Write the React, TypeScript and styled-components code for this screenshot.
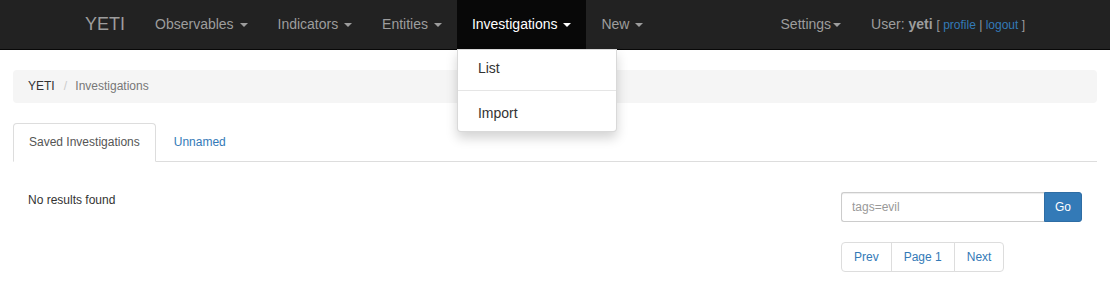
import React from "react";
import styled, { createGlobalStyle } from "styled-components";

const GlobalStyle = createGlobalStyle`
  * { box-sizing: border-box; }
  html, body { margin: 0; padding: 0; background: #fff; }
  body {
    font-family: "Liberation Sans", Arial, Helvetica, sans-serif;
    font-size: 12px;
    line-height: 1.42857143;
    color: #333;
  }
  ul, ol { margin: 0; padding: 0; list-style: none; }
  a { text-decoration: none; }
`;

const Navbar = styled.nav`
  background: #222;
  border-bottom: 1px solid #080808;
  position: relative;
  z-index: 10;
`;

const NavContainer = styled.div`
  width: 970px;
  margin: 0 auto;
  display: flex;
  height: 49px;
  font-size: 14px;
`;

const Brand = styled.a`
  padding: 0 15px;
  font-size: 18px;
  line-height: 49px;
  color: #9d9d9d;
`;

const NavList = styled.ul<{ $right?: boolean }>`
  display: flex;
  margin-left: ${(p) => (p.$right ? "auto" : "0")};
`;

const NavItem = styled.li`
  position: relative;
  display: flex;
`;

const NavLink = styled.a<{ $active?: boolean }>`
  display: block;
  padding: 0 15px;
  line-height: 49px;
  color: ${(p) => (p.$active ? "#fff" : "#9d9d9d")};
  background: ${(p) => (p.$active ? "#080808" : "transparent")};
  white-space: pre;
`;

const Caret = styled.span`
  display: inline-block;
  width: 0;
  height: 0;
  margin-left: 2px;
  vertical-align: middle;
  border-top: 4px solid currentColor;
  border-right: 4px solid transparent;
  border-left: 4px solid transparent;
`;

const DropdownMenu = styled.ul`
  position: absolute;
  top: 100%;
  left: 0;
  min-width: 160px;
  padding: 5px 0;
  background: #fff;
  border: 1px solid rgba(0, 0, 0, 0.15);
  border-radius: 0 0 4px 4px;
  box-shadow: 0 6px 12px rgba(0, 0, 0, 0.175);
  font-size: 14px;
  z-index: 20;
`;

const MenuItem = styled.li`
  padding: 3px 20px;
  line-height: 20px;
  color: #333;
  white-space: nowrap;
`;

const Divider = styled.li`
  height: 1px;
  margin: 9px 0;
  background: #e5e5e5;
`;

const NavText = styled.p`
  margin: 0 15px;
  line-height: 49px;
  color: #9d9d9d;
  white-space: pre;
  b { font-weight: bold; }
`;

const Small = styled.small`
  font-size: 12px;
  a { color: #337ab7; }
`;

const Main = styled.main`
  padding: 0 13px;
  margin-top: 20px;
`;

const Breadcrumb = styled.ol`
  display: flex;
  padding: 8px 15px;
  margin-bottom: 20px;
  background: #f5f5f5;
  border-radius: 4px;
`;

const Crumb = styled.li<{ $active?: boolean }>`
  color: ${(p) => (p.$active ? "#777" : "#333")};
`;

const CrumbSep = styled.li`
  padding: 0 5px 0 9px;
  color: #ccc;
  white-space: pre;
`;

const Tabs = styled.ul`
  display: flex;
  border-bottom: 1px solid #ddd;
`;

const Tab = styled.li<{ $active?: boolean }>`
  margin-right: 2px;
  margin-bottom: -1px;
  padding: 10px 15px;
  border: 1px solid ${(p) => (p.$active ? "#ddd" : "transparent")};
  border-bottom-color: transparent;
  border-radius: 4px 4px 0 0;
  background: ${(p) => (p.$active ? "#fff" : "transparent")};
  color: ${(p) => (p.$active ? "#555" : "#337ab7")};
`;

const Row = styled.div`
  display: grid;
  grid-template-columns: 75% 25%;
  margin-top: 30px;
`;

const Col = styled.div`
  padding: 0 15px;
`;

const InputGroup = styled.div`
  display: flex;
`;

const Input = styled.input`
  flex: 1;
  min-width: 0;
  height: 30px;
  padding: 5px 10px;
  font-family: inherit;
  font-size: 12px;
  line-height: 1.5;
  color: #555;
  border: 1px solid #ccc;
  border-right: 0;
  border-radius: 3px 0 0 3px;
  box-shadow: inset 0 1px 1px rgba(0, 0, 0, 0.075);
  outline: none;
  &::placeholder { color: #999; }
`;

const GoButton = styled.button`
  height: 30px;
  padding: 5px 10px;
  font-family: inherit;
  font-size: 12px;
  line-height: 1.5;
  color: #fff;
  background: #337ab7;
  border: 1px solid #2e6da4;
  border-radius: 0 3px 3px 0;
`;

const Pagination = styled.ul`
  display: inline-flex;
  margin: 20px 0;
`;

const PageItem = styled.li`
  padding: 5px 12px;
  line-height: 18px;
  color: #337ab7;
  background: #fff;
  border: 1px solid #ddd;
  & + & { margin-left: -1px; }
  &:first-child { border-radius: 4px 0 0 4px; }
  &:last-child { border-radius: 0 4px 4px 0; }
`;

export default function App() {
  return (
    <>
      <GlobalStyle />
      <Navbar>
        <NavContainer>
          <Brand>YETI</Brand>
          <NavList>
            <NavItem>
              <NavLink>Observables <Caret /></NavLink>
            </NavItem>
            <NavItem>
              <NavLink>Indicators <Caret /></NavLink>
            </NavItem>
            <NavItem>
              <NavLink>Entities <Caret /></NavLink>
            </NavItem>
            <NavItem>
              <NavLink $active>Investigations <Caret /></NavLink>
              <DropdownMenu>
                <MenuItem>List</MenuItem>
                <Divider />
                <MenuItem>Import</MenuItem>
              </DropdownMenu>
            </NavItem>
            <NavItem>
              <NavLink>New <Caret /></NavLink>
            </NavItem>
          </NavList>
          <NavList $right>
            <NavItem>
              <NavLink>Settings<Caret /></NavLink>
            </NavItem>
            <NavItem>
              <NavText>
                User: <b>yeti</b>{" "}
                <Small>
                  [ <a>profile</a> | <a>logout</a> ]
                </Small>
              </NavText>
            </NavItem>
          </NavList>
        </NavContainer>
      </Navbar>
      <Main>
        <Breadcrumb>
          <Crumb>YETI</Crumb>
          <CrumbSep>/ </CrumbSep>
          <Crumb $active>Investigations</Crumb>
        </Breadcrumb>
        <Tabs>
          <Tab $active>Saved Investigations</Tab>
          <Tab>Unnamed</Tab>
        </Tabs>
        <Row>
          <Col>No results found</Col>
          <Col>
            <InputGroup>
              <Input placeholder="tags=evil" />
              <GoButton>Go</GoButton>
            </InputGroup>
            <Pagination>
              <PageItem>Prev</PageItem>
              <PageItem>Page 1</PageItem>
              <PageItem>Next</PageItem>
            </Pagination>
          </Col>
        </Row>
      </Main>
    </>
  );
}
